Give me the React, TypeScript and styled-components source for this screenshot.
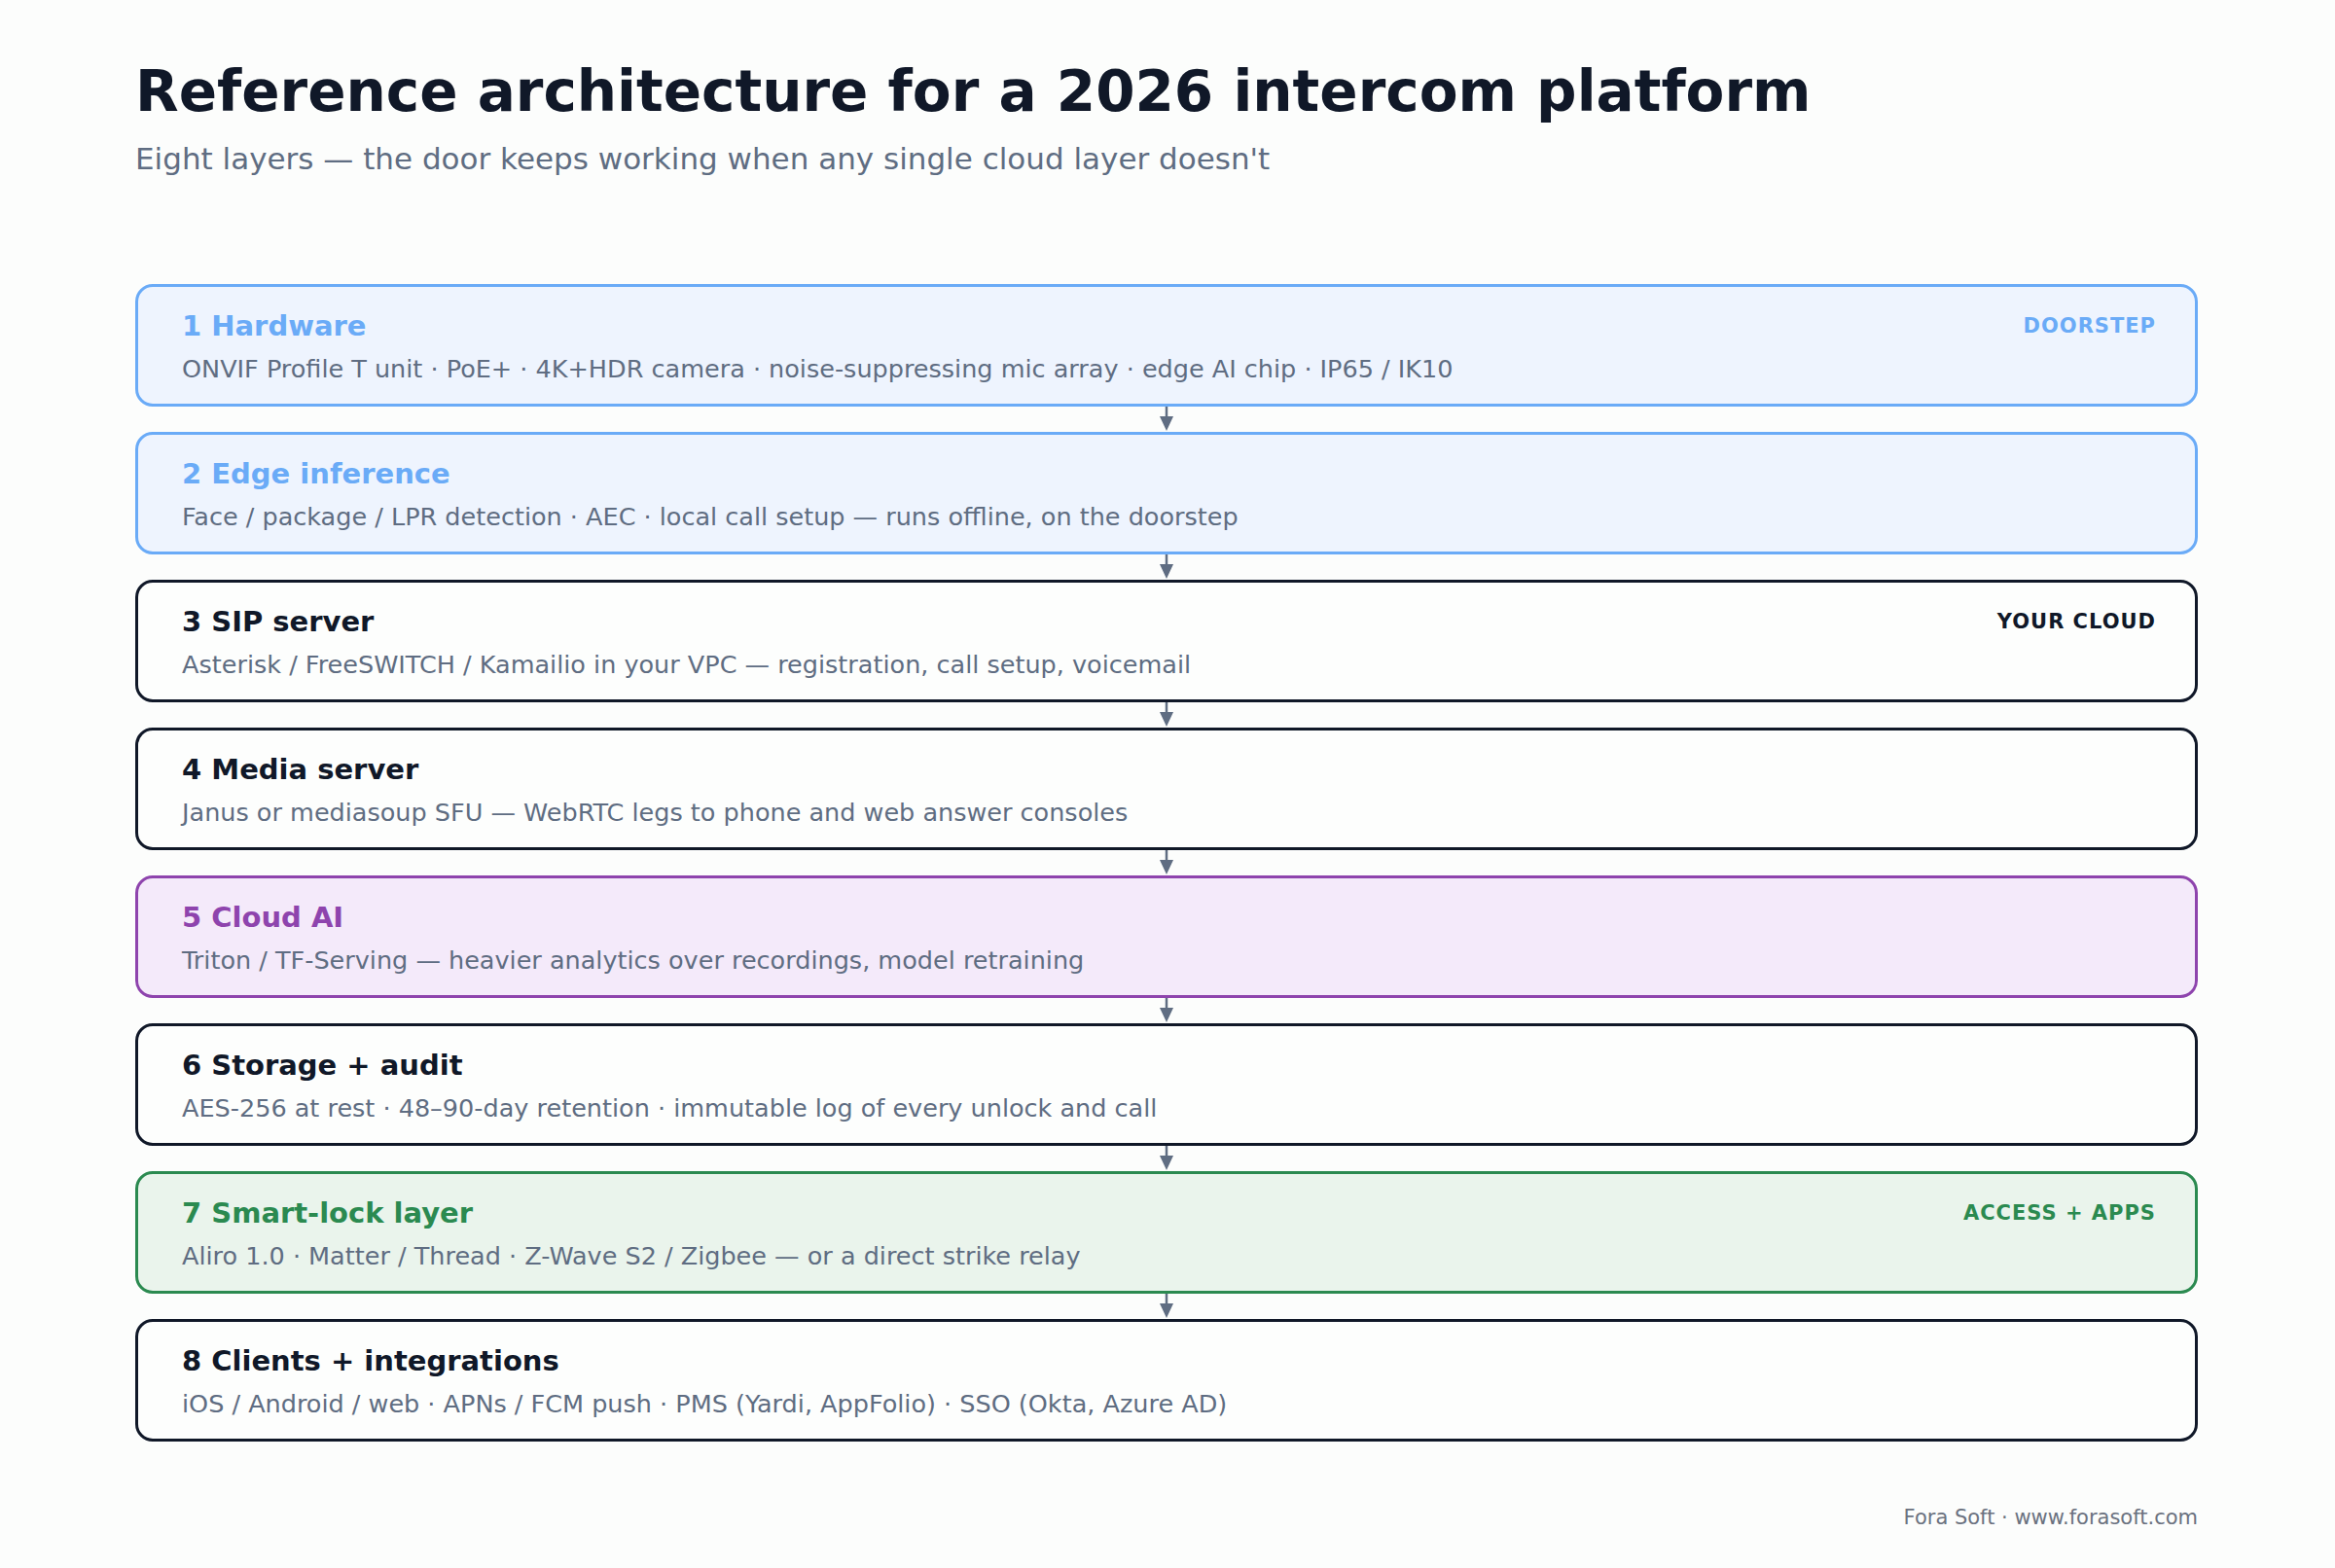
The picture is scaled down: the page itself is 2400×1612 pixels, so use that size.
import React from "react"
import styled, { createGlobalStyle } from "styled-components"

const Global = createGlobalStyle`
    body {
        margin: 0;
        background: #fcfdfc;
        font-family: "DejaVu Sans", "Noto Sans", sans-serif;
    }
`

type Tone = "blue" | "dark" | "purple" | "green"

const tones: Record<Tone, { border: string; bg: string; title: string }> = {
    blue: { border: "#6aabf7", bg: "#eef4fe", title: "#6aabf7" },
    dark: { border: "#101828", bg: "#fdfefd", title: "#101828" },
    purple: { border: "#8e44ad", bg: "#f4eafa", title: "#8e44ad" },
    green: { border: "#2b8a50", bg: "#eaf4ec", title: "#2b8a50" },
}

const layers: { title: string; desc: string; tone: Tone; tag?: string }[] = [
    { title: "1 Hardware", desc: "ONVIF Profile T unit · PoE+ · 4K+HDR camera · noise-suppressing mic array · edge AI chip · IP65 / IK10", tone: "blue", tag: "DOORSTEP" },
    { title: "2 Edge inference", desc: "Face / package / LPR detection · AEC · local call setup — runs offline, on the doorstep", tone: "blue" },
    { title: "3 SIP server", desc: "Asterisk / FreeSWITCH / Kamailio in your VPC — registration, call setup, voicemail", tone: "dark", tag: "YOUR CLOUD" },
    { title: "4 Media server", desc: "Janus or mediasoup SFU — WebRTC legs to phone and web answer consoles", tone: "dark" },
    { title: "5 Cloud AI", desc: "Triton / TF-Serving — heavier analytics over recordings, model retraining", tone: "purple" },
    { title: "6 Storage + audit", desc: "AES-256 at rest · 48–90-day retention · immutable log of every unlock and call", tone: "dark" },
    { title: "7 Smart-lock layer", desc: "Aliro 1.0 · Matter / Thread · Z-Wave S2 / Zigbee — or a direct strike relay", tone: "green", tag: "ACCESS + APPS" },
    { title: "8 Clients + integrations", desc: "iOS / Android / web · APNs / FCM push · PMS (Yardi, AppFolio) · SSO (Okta, Azure AD)", tone: "dark" },
]

export default function App() {
    return (
        <Page>
            <Global />
            <Title>Reference architecture for a 2026 intercom platform</Title>
            <Subtitle>Eight layers — the door keeps working when any single cloud layer doesn't</Subtitle>
            <Stack>
                {layers.map((l, i) => (
                    <React.Fragment key={l.title}>
                        {i > 0 && (
                            <Connector>
                                <svg width="18" height="26" viewBox="0 0 18 26">
                                    <line x1="9" y1="0" x2="9" y2="14" stroke="#5f6d82" strokeWidth="2.5" />
                                    <polygon points="2,10 16,10 9,25" fill="#5f6d82" />
                                </svg>
                            </Connector>
                        )}
                        <Card tone={l.tone}>
                            <CardHead>
                                <CardTitle tone={l.tone}>{l.title}</CardTitle>
                                {l.tag && <Tag tone={l.tone}>{l.tag}</Tag>}
                            </CardHead>
                            <Desc>{l.desc}</Desc>
                        </Card>
                    </React.Fragment>
                ))}
            </Stack>
            <Footer>Fora Soft · www.forasoft.com</Footer>
        </Page>
    )
}

const Page = styled.div`
    width: 2400px;
    height: 1612px;
    box-sizing: border-box;
    padding: 58px 141px 0 139px;
    display: flex;
    flex-direction: column;
`
const Title = styled.h1`
    margin: 0;
    font-size: 58px;
    line-height: 72px;
    font-weight: 700;
    color: #101828;
`
const Subtitle = styled.div`
    margin-top: 14px;
    font-size: 31px;
    line-height: 38px;
    color: #5f6d82;
`
const Stack = styled.div`
    margin-top: 110px;
    display: flex;
    flex-direction: column;
`
const Connector = styled.div`
    height: 26px;
    display: flex;
    justify-content: center;
    svg {
        display: block;
    }
`
const Card = styled.div<{ tone: Tone }>`
    height: 126px;
    box-sizing: border-box;
    border: 3px solid ${({ tone }) => tones[tone].border};
    background: ${({ tone }) => tones[tone].bg};
    border-radius: 18px;
    padding: 22px 40px 0 45px;
`
const CardHead = styled.div`
    display: flex;
    justify-content: space-between;
    align-items: center;
    height: 36px;
`
const CardTitle = styled.div<{ tone: Tone }>`
    font-size: 29px;
    line-height: 36px;
    font-weight: 700;
    color: ${({ tone }) => tones[tone].title};
`
const Tag = styled.div<{ tone: Tone }>`
    font-size: 21px;
    font-weight: 700;
    letter-spacing: 1px;
    color: ${({ tone }) => tones[tone].title};
`
const Desc = styled.div`
    margin-top: 10px;
    font-size: 25.5px;
    line-height: 32px;
    color: #5f6d82;
`
const Footer = styled.div`
    margin-top: 66px;
    text-align: right;
    font-size: 21px;
    color: #6b7280;
`
